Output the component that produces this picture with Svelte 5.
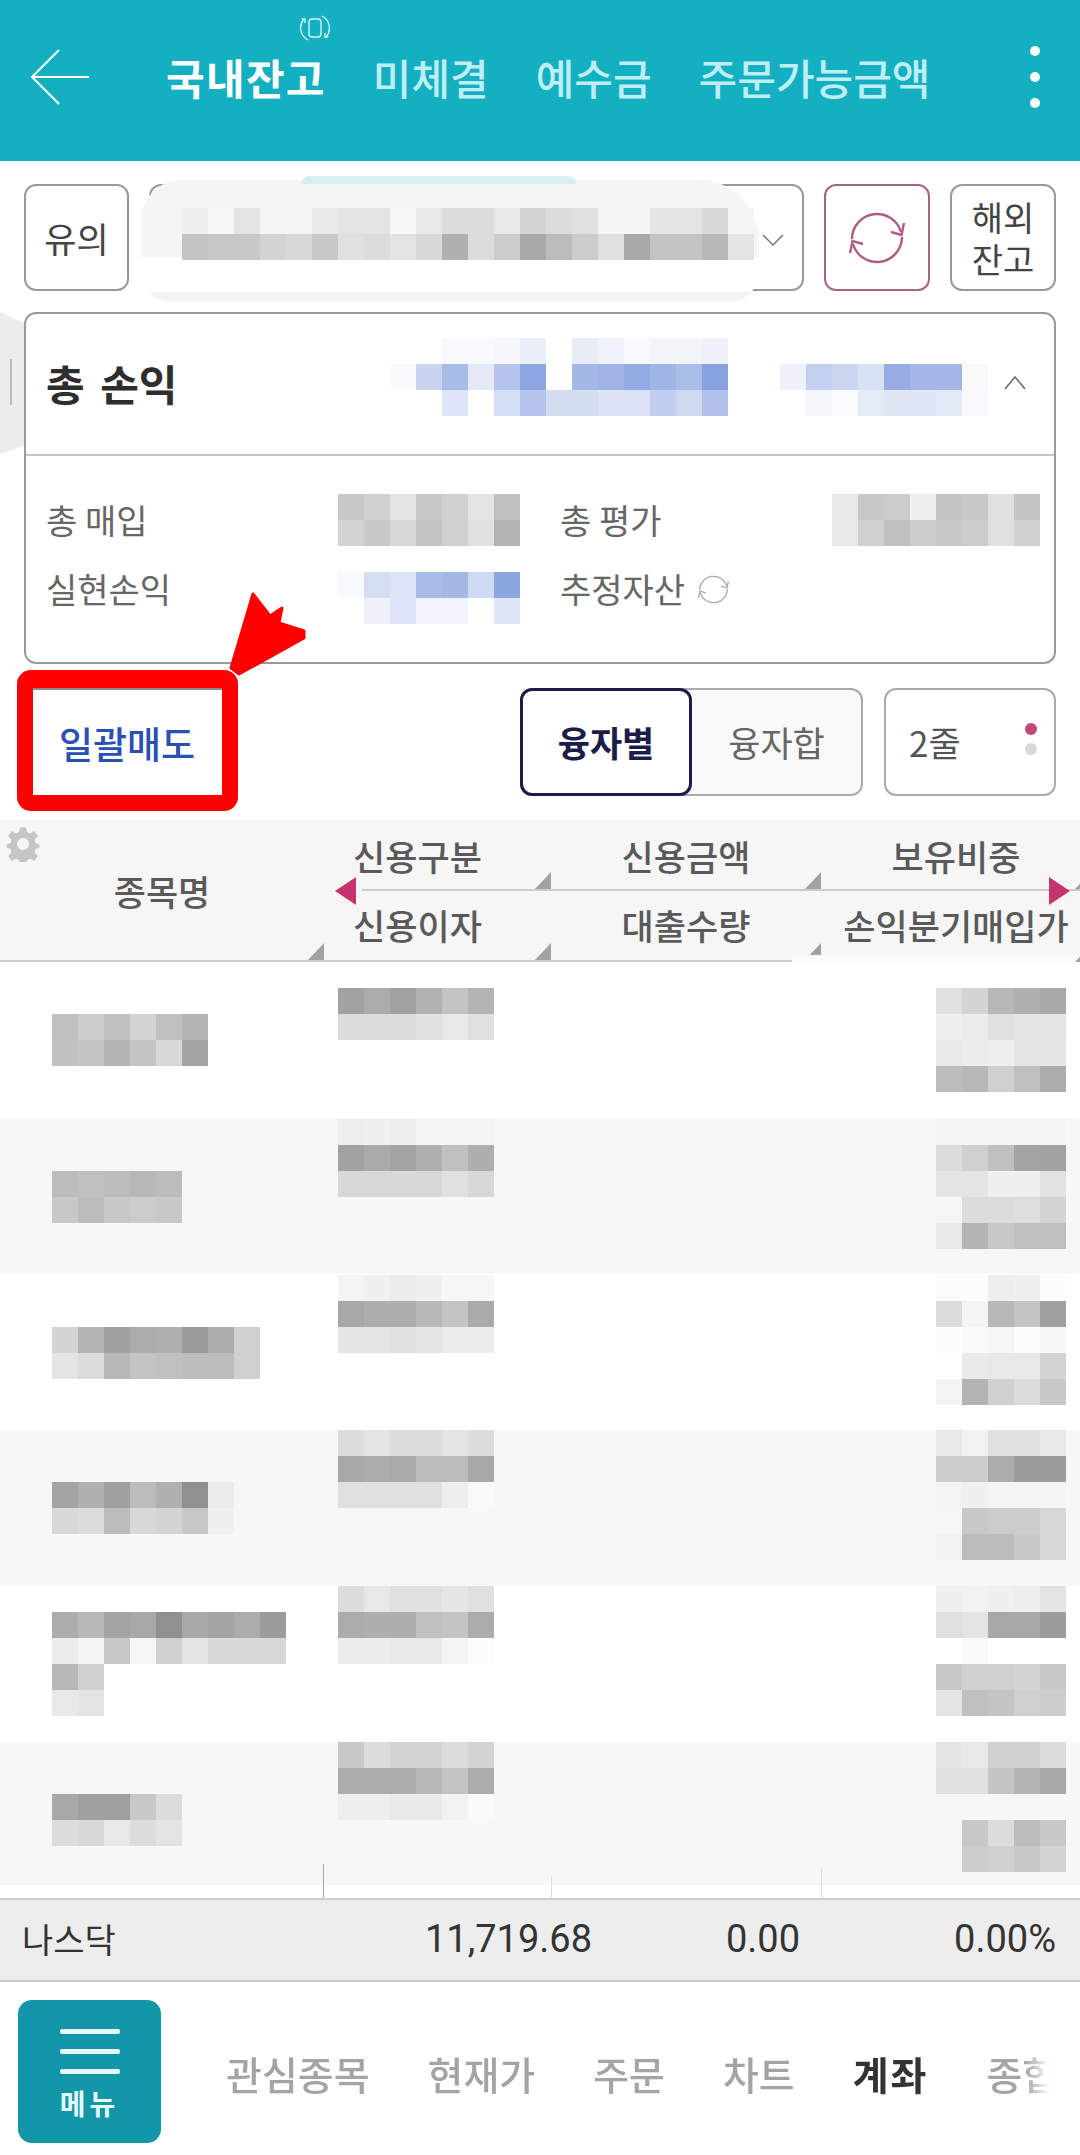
<script>
// blurred cells: two hex digits = grey, six = full colour, "-" = empty
const parse = (s) => s.split("/").map((r) => r.trim().split(" ").map((c) => (c === "-" ? "transparent" : c.length === 2 ? `#${c}${c}${c}` : `#${c}`)));

const accountBlur = parse("f0 f6 e4 f4 f4 e8 e4 e4 f8 e8 dc dc e8 d4 dc e0 f4 f4 e4 e4 d8 f4 / c4 c8 c8 d4 d8 c8 e0 dc e4 d8 b0 dc cc a8 bc cc e0 a8 c4 c4 b8 e4");
const profitBlur = parse(
  "- - f9f9fc f9f9fc f6f7fb eaeef8 - e8ecf7 f0f2f9 f8f9fc f2f4fa f2f4fa eef1f8 - - - - - - - - - - / fafafd c8d4f0 a8bce8 e4e9f5 b4c4ec 8ea6e2 - a4b8e6 a0b4e6 94aae2 a0b4e6 acbde8 88a2e0 - - eef1fa c4d0f0 ccd6f0 d8e0f4 98ace4 a4b6e8 a4b6e8 fafafd / - - dce4f6 - d4def4 b4c4ec d4dcf0 d4dcf0 dce2f4 dce2f4 c0cdee d0d9f0 b0c0ea - - - f4f6fc fcfcfe e6ebf8 e0e6f6 e0e6f6 e4e9f8 f8f9fd"
);
const buyBlur = parse("c8 d0 e4 c8 d0 e4 c0 / d4 c8 d8 c4 d0 e0 b4");
const evalBlur = parse("e8 c8 cc f0 c4 c8 e0 c4 / e8 d0 c0 cc c8 cc e0 d0");
const realBlur = parse("f8f9fc d4ddf2 dce4f6 a8bce8 a4b8e6 d0daf2 8ca6e0 / - eef1fa dfe5f6 f2f4fb f2f4fb - e0e6f6");

const rows = [
  {
    nameTop: 52, midTop: 26, rightTop: 26,
    name: parse("c0 cc c0 d4 c0 b4 / c2 c4 b4 c4 d8 a4"),
    mid: parse("a2 ac a2 b2 c4 b4 / dc dc dc e0 e8 e0"),
    right: parse("e0 d4 b8 b0 a8 / f0 ec e0 e4 e4 / e8 ec ee e6 e6 / bc b8 d0 c0 ac"),
  },
  {
    nameTop: 53, midTop: 1, rightTop: 1,
    name: parse("bc c0 bc b8 bc / c8 bc c8 cc c8"),
    mid: parse("ee f0 ee f4 f4 f4 / a2 aa a4 b0 c0 ae / d8 d8 d8 d8 e0 d8"),
    right: parse("f4 f4 f4 f4 f4 / dc d0 c0 a4 a2 / e4 e4 f0 f0 e2 / f6 dc dc de d4 / e8 b4 c8 c0 c0"),
  },
  {
    nameTop: 53, midTop: 1, rightTop: 1,
    name: parse("d4 b4 a0 ac b0 9c ac d0 / e4 dc b8 c4 c0 bc bc d0"),
    mid: parse("f4 f0 ec f0 f6 f6 / a8 ae ae b8 c4 aa / e4 e4 e0 e4 ec ec"),
    right: parse("fc fc ee f0 fc / dc f4 b8 c4 a0 / fc fa f6 fc f6 / - ea e8 e8 d4 / f4 b4 d0 dc c8"),
  },
  {
    nameTop: 52, midTop: 0, rightTop: 0,
    name: parse("a4 b0 a0 bc b0 90 ec / d8 dc bc d8 d4 c8 f0"),
    mid: parse("dc e4 dc dc e4 dc / a8 ac aa bc bc a8 / e0 e0 e0 e0 ee fa"),
    right: parse("e8 f2 e0 e0 e8 / cc cc ac 9c 9c / f4 f0 f4 f4 f4 / f6 c8 cc cc d8 / f2 bc bc c8 d8"),
  },
  {
    nameTop: 26, midTop: 0, rightTop: 0,
    name: parse("ac b8 a4 a8 90 a8 a4 ac 9c / ec f4 c8 f6 d0 e4 d8 d8 d8 / b8 d0 - - - - - - - / e8 e4 - - - - - - -"),
    mid: parse("dc e8 e0 e0 e6 e0 / ac ae ae c0 c4 ac / ec ec e8 e8 f4 fc"),
    right: parse("f0 f2 f0 ee e4 / e0 e4 a8 a8 9c / - fa - - - / c8 d0 d0 d4 c8 / e4 c0 c4 d0 cc"),
  },
  {
    nameTop: 52, midTop: 0, rightTop: 0,
    name: parse("a8 a0 a0 c8 dc / dc d8 e8 dc e4"),
    mid: parse("c8 dc d4 d4 dc d4 / ac ac ac b8 c4 ac / ee ee ea ea f2 fa"),
    right: parse("e4 e8 d0 d0 dc / e0 e0 c4 b4 a8 / - - - - - / - c8 dc bc c8 / - cc d0 c8 d4"),
  },
];

const navItems = ["관심종목", "현재가", "주문", "차트", "계좌", "종합"];
</script>

{#snippet blur(cells)}
  <div class="blur">
    {#each cells as line}
      <div class="blur-line">
        {#each line as c}<span style:background={c}></span>{/each}
      </div>
    {/each}
  </div>
{/snippet}

{#snippet cycle(color, w)}
  <svg viewBox="0 0 60 60" width={w} height={w} fill="none" stroke={color} stroke-width="2.4">
    <path d="M5 31 A25 25 0 0 1 54 24" />
    <path d="M44 24 L54.5 27 L57 15" />
    <path d="M55 29 A25 25 0 0 1 6 36" />
    <path d="M16 36 L5.5 33 L3 45" />
  </svg>
{/snippet}

<div class="page">
  <header class="top">
    <svg class="back" viewBox="0 0 60 56" width="60" height="56" fill="none" stroke="#fff" stroke-width="2">
      <path d="M29 1 L2 28 L29 55 M2 28 H59" />
    </svg>
    <nav class="tabs">
      <span class="tab on">국내잔고</span>
      <span class="tab">미체결</span>
      <span class="tab">예수금</span>
      <span class="tab">주문가능금액</span>
    </nav>
    <svg class="phone" viewBox="0 0 30 30" width="30" height="30" fill="none" stroke="#d4f3f6" stroke-width="1.4">
      <rect x="9" y="6" width="12" height="18" rx="3" />
      <path d="M4 6 A13.5 13.5 0 0 0 8 27 M26 24 A13.5 13.5 0 0 0 22 3" />
      <path d="M1.5 6 H5 V10 M28.5 24 H25 V20" />
    </svg>
    <div class="kebab"><i></i><i></i><i></i></div>
  </header>

  <section class="tools">
    <button class="btn warn">유의</button>
    <div class="btn account">
      <svg class="chev" viewBox="0 0 22 12" width="22" height="12" fill="none" stroke="#777" stroke-width="1.5"><path d="M1 1 L11 11 L21 1" /></svg>
      <div class="smear"></div>
      <div class="smear-top"></div>
      <div class="account-blur">{@render blur(accountBlur)}</div>
    </div>
    <button class="btn refresh">{@render cycle("#b05c88", 60)}</button>
    <button class="btn abroad">해외<br />잔고</button>
  </section>

  <div class="handle"><i></i></div>

  <section class="card">
    <div class="card-head">
      <strong>총 손익</strong>
      {@render blur(profitBlur)}
      <svg class="chev-up" viewBox="0 0 22 14" width="22" height="14" fill="none" stroke="#666" stroke-width="1.5"><path d="M1 13 L11 1 L21 13" /></svg>
    </div>
    <div class="card-body">
      <span>총 매입</span>
      {@render blur(buyBlur)}
      <span>총 평가</span>
      {@render blur(evalBlur)}
      <span class="up">실현손익</span>
      {@render blur(realBlur)}
      <span class="est up">추정자산 {@render cycle("#aaa", 33)}</span>
    </div>
  </section>

  <section class="actions">
    <button class="sell">일괄매도</button>
    <div class="seg">
      <span class="seg-on">융자별</span>
      <span class="seg-off">융자합</span>
    </div>
    <div class="lines">
      2줄
      <div class="dots"><i></i><i></i></div>
    </div>
  </section>

  <section class="thead">
    <svg class="gear" viewBox="0 0 24 24" width="36" height="36">
      <path fill="#c6c6c6" fill-rule="evenodd" d="M10 1h4l.6 3 2.2 1 2.6-1.6 2.6 3.4-2.2 2.2.4 2.4 2.8 1v2l-2.8 1-.4 2.4 2.2 2.2-2.6 3.4-2.6-1.6-2.2 1-.6 3h-4l-.6-3-2.2-1-2.6 1.6-2.6-3.4 2.2-2.2-.4-2.4-2.8-1v-2l2.8-1 .4-2.4-2.2-2.2 2.6-3.4 2.6 1.6 2.2-1zM12 8a4 4 0 1 0 0 8 4 4 0 0 0 0-8z" />
    </svg>
    <div class="th name">종목명</div>
    <div class="th mid first top-row">신용구분</div>
    <div class="th mid top-row">신용금액</div>
    <div class="th mid top-row">보유비중</div>
    <div class="th mid first">신용이자</div>
    <div class="th mid">대출수량</div>
    <div class="th mid last">손익분기매입가</div>
    <i class="arrow left"></i>
    <i class="arrow right"></i>
  </section>

  <section class="tbody">
    {#each rows as r, i}
      <div class="row" class:alt={i % 2 === 1}>
        <div class="c-name" style:padding-top="{r.nameTop}px">{@render blur(r.name)}</div>
        <div class="c-mid" style:padding-top="{r.midTop}px">{@render blur(r.mid)}</div>
        <div class="c-gap"></div>
        <div class="c-right" style:padding-top="{r.rightTop}px">{@render blur(r.right)}</div>
      </div>
    {/each}
    <div class="tail"><i class="l1"></i><i class="l2"></i><i class="l3"></i></div>
  </section>

  <section class="index">
    <span class="idx-name">나스닥</span>
    <span class="idx-val v1">11,719.68</span>
    <span class="idx-val v2">0.00</span>
    <span class="idx-val v3">0.00%</span>
  </section>

  <footer class="bottom">
    <div class="menu">
      <i></i><i></i><i></i>
      <span>메뉴</span>
    </div>
    <nav class="nav">
      {#each navItems as item}
        <span class:cur={item === "계좌"}>{item}</span>
      {/each}
    </nav>
  </footer>

  <div class="red-box"></div>
  <svg class="red-arrow" viewBox="0 0 90 90" width="90" height="90">
    <path fill="#fe0000" stroke="#fe0000" stroke-width="3" stroke-linejoin="round" d="M29 4 L46 26 L58 18 L55 33 L80 41 L80 48 L15 84 L7 78 Z" />
  </svg>
</div>

<style>
:global(body) {
  margin: 0;
  background: #fff;
}
.page {
  position: relative;
  width: 1080px;
  height: 2155px;
  overflow: hidden;
  background: #fff;
  font-family: "Noto Sans CJK KR", "Noto Sans", sans-serif;
  color: #555;
}
button {
  font-family: inherit;
  background: #fff;
  padding: 0;
}
i {
  display: block;
}

.blur-line {
  display: flex;
}
.blur-line span {
  width: 26px;
  height: 26px;
  flex: none;
}

/* top bar */
.top {
  position: relative;
  height: 161px;
  background: #14b0c1;
}
.back {
  position: absolute;
  left: 30px;
  top: 49px;
}
.tabs {
  display: flex;
  padding: 47px 0 0 166px;
  gap: 47px;
  font-size: 42px;
  line-height: 60px;
  color: #bdeef3;
  font-weight: 500;
}
.tab.on {
  color: #fff;
  font-weight: 700;
  letter-spacing: 1.3px;
}
.phone {
  position: absolute;
  left: 300px;
  top: 13px;
}
.kebab {
  position: absolute;
  left: 1030px;
  top: 46px;
  display: flex;
  flex-direction: column;
  gap: 16px;
}
.kebab i {
  width: 10px;
  height: 10px;
  border-radius: 50%;
  background: #fff;
}

/* account row */
.tools {
  display: flex;
  gap: 20px;
  padding: 23px 24px 0;
  height: 107px;
}
.btn {
  box-sizing: border-box;
  border: 2px solid #999;
  border-radius: 12px;
  font-size: 35px;
  line-height: 42px;
  color: #444;
  display: flex;
  align-items: center;
  justify-content: center;
}
.warn {
  width: 105px;
}
.account {
  position: relative;
  width: 655px;
  background: #fff;
}
.chev {
  position: absolute;
  left: 611px;
  top: 48px;
}
.smear {
  position: absolute;
  left: -10px;
  top: -6px;
  width: 618px;
  height: 122px;
  border-radius: 40px 60px 30px 30px;
  background: linear-gradient(#f5f5f5 0 63%, #fff 63% 92%, #f3f3f3 92%);
}
.smear-top {
  position: absolute;
  left: 150px;
  top: -10px;
  width: 275px;
  height: 8px;
  border-radius: 8px 8px 0 0;
  background: #d6eff2;
}
.account-blur {
  position: absolute;
  left: 31px;
  top: 22px;
}
.refresh {
  width: 106px;
  border-color: #a8628a;
}
.abroad {
  width: 106px;
  font-size: 34px;
}

/* drawer handle */
.handle {
  position: absolute;
  left: 0;
  top: 312px;
  width: 24px;
  height: 142px;
  background: #ececec;
  clip-path: polygon(0 0, 100% 8%, 100% 94%, 0 100%);
}
.handle i {
  position: absolute;
  left: 10px;
  top: 47px;
  width: 2px;
  height: 46px;
  background: #bbb;
}

/* summary card */
.card {
  box-sizing: border-box;
  position: relative;
  margin: 21px 24px 0;
  height: 352px;
  border: 2px solid #999;
  border-radius: 12px;
}
.card-head {
  box-sizing: border-box;
  display: flex;
  height: 142px;
  padding-top: 24px;
  border-bottom: 2px solid #c4c4c4;
}
.card-head strong {
  width: 364px;
  flex: none;
  padding-left: 20px;
  box-sizing: border-box;
  font-size: 42px;
  line-height: 90px;
  word-spacing: 6px;
  font-weight: 700;
  color: #2e2e2e;
}
.chev-up {
  margin: 38px 0 0 16px;
}
.card-body {
  display: grid;
  grid-template-columns: 292px 222px 272px auto;
  grid-auto-rows: 52px;
  row-gap: 26px;
  padding: 38px 0 0 20px;
  font-size: 34px;
  line-height: 52px;
  color: #666;
}
.up {
  margin-top: -9px;
}
.est {
  display: flex;
  align-items: center;
  gap: 12px;
  height: 52px;
}

/* button row */
.actions {
  display: flex;
  margin: 24px 24px 0;
  height: 108px;
}
.sell {
  border: none;
  border-top: 2px solid #8a8a8a;
  width: 206px;
  margin-right: 290px;
  font-size: 37px;
  font-weight: 500;
  color: #2a50b4;
}
.seg {
  display: flex;
  width: 343px;
  box-sizing: border-box;
  border: 2px solid #aaa;
  border-radius: 12px;
  background: #f9f9f9;
  font-size: 35px;
}
.seg-on {
  box-sizing: border-box;
  width: 172px;
  margin: -2px 0 -2px -2px;
  border: 3px solid #1c1c4a;
  border-radius: 12px;
  background: #fff;
  color: #1c1c4a;
  font-weight: 700;
  text-align: center;
  line-height: 102px;
}
.seg-off {
  flex: 1;
  text-align: center;
  line-height: 104px;
  color: #666;
}
.lines {
  box-sizing: border-box;
  position: relative;
  width: 172px;
  margin-left: 21px;
  padding-left: 23px;
  border: 2px solid #aaa;
  border-radius: 12px;
  font-size: 35px;
  line-height: 104px;
  color: #555;
}
.dots {
  position: absolute;
  right: 17px;
  top: 33px;
}
.dots i {
  width: 12px;
  height: 12px;
  margin-bottom: 8px;
  border-radius: 50%;
  background: #c0487a;
}
.dots i + i {
  background: #d8d8d8;
}

/* table */
.thead {
  position: relative;
  display: grid;
  grid-template-columns: 324px 227px 270px 270px;
  grid-template-rows: 71px 71px;
  margin-top: 24px;
  background: #f6f6f6;
}
.th {
  position: relative;
  box-sizing: border-box;
  text-align: center;
  font-size: 35px;
  font-weight: 500;
  line-height: 68px;
  color: #5a5a5a;
  white-space: nowrap;
}
.th::after {
  content: "";
  position: absolute;
  right: 0;
  bottom: 0;
  width: 16px;
  height: 17px;
  background: #a2a2a2;
  clip-path: polygon(100% 0, 100% 100%, 0 100%);
}
.name {
  grid-row: 1 / 3;
  line-height: 142px;
  border-bottom: 2px solid #ccc;
}
.mid {
  border-bottom: 2px solid #ccc;
}
.top-row {
  padding-top: 2px;
}
.first {
  padding-right: 40px;
}
/* the divider only starts after the left arrow */
.first.top-row::before {
  content: "";
  position: absolute;
  left: 0;
  bottom: -2px;
  width: 38px;
  height: 2px;
  background: #f6f6f6;
}
.last {
  border-bottom: none;
}
.last::before {
  content: "";
  position: absolute;
  left: -29px;
  right: 0;
  bottom: -2px;
  height: 9px;
  background: #fbfbfb;
}
.gear {
  position: absolute;
  left: 5px;
  top: 6px;
}
.arrow {
  position: absolute;
  top: 57px;
  width: 21px;
  height: 28px;
  background: #c8336f;
}
.arrow.left {
  left: 335px;
  clip-path: polygon(100% 0, 100% 100%, 0 50%);
}
.arrow.right {
  left: 1049px;
  clip-path: polygon(0 0, 100% 50%, 0 100%);
}
.row {
  display: grid;
  grid-template-columns: 324px 227px 270px 259px;
  height: 156px;
  box-sizing: border-box;
  overflow: hidden;
}
.row.alt {
  background: #f7f7f7;
}
.row:nth-last-child(2) {
  height: 143px;
}
.c-name {
  padding-left: 52px;
}
.c-mid {
  padding-left: 14px;
}
.c-right {
  padding-left: 115px;
}
.tail {
  position: relative;
  height: 13px;
}
.tail i {
  position: absolute;
  bottom: 0;
  width: 1px;
  background: #ddd;
}
.tail .l1 {
  left: 323px;
  height: 34px;
  background: #aaa;
}
.tail .l2 {
  left: 551px;
  height: 22px;
}
.tail .l3 {
  left: 821px;
  height: 30px;
}

/* index bar */
.index {
  display: flex;
  box-sizing: border-box;
  height: 84px;
  padding: 0 24px 0 22px;
  border-top: 2px solid #d0d0d0;
  border-bottom: 2px solid #ccc;
  background: #ededed;
  line-height: 78px;
  font-size: 34px;
  color: #333;
}
.idx-name {
  width: 200px;
}
.idx-val {
  font-family: Roboto, sans-serif;
  font-size: 38px;
  text-align: right;
}
.v1 {
  width: 370px;
}
.v2 {
  width: 208px;
}
.v3 {
  width: 256px;
}

/* bottom menu */
.bottom {
  display: flex;
  padding: 18px 0 0 18px;
}
.menu {
  box-sizing: border-box;
  width: 143px;
  height: 143px;
  padding-top: 29px;
  border-radius: 14px;
  background: #1496a9;
  text-align: center;
}
.menu i {
  width: 60px;
  height: 5px;
  margin: 0 auto 15px;
  border-radius: 2px;
  background: #e4f8fa;
}
.menu span {
  display: block;
  margin-top: -4px;
  font-size: 28px;
  line-height: 36px;
  letter-spacing: 4px;
  font-weight: 700;
  color: #e4f8fa;
}
.nav {
  display: flex;
  gap: 58px;
  width: 824px;
  margin-left: 65px;
  overflow: hidden;
  font-size: 39px;
  line-height: 146px;
  color: #a4a4a4;
  font-weight: 500;
  white-space: nowrap;
  mask-image: linear-gradient(to right, #000 97%, transparent 100%);
}
.nav .cur {
  color: #333;
  font-weight: 700;
  letter-spacing: 2px;
}

/* annotation */
.red-box {
  position: absolute;
  left: 17px;
  top: 670px;
  width: 221px;
  height: 141px;
  box-sizing: border-box;
  border: 16px solid #fe0000;
  border-top-width: 18px;
  border-radius: 14px;
}
.red-arrow {
  position: absolute;
  left: 224px;
  top: 590px;
}
</style>
